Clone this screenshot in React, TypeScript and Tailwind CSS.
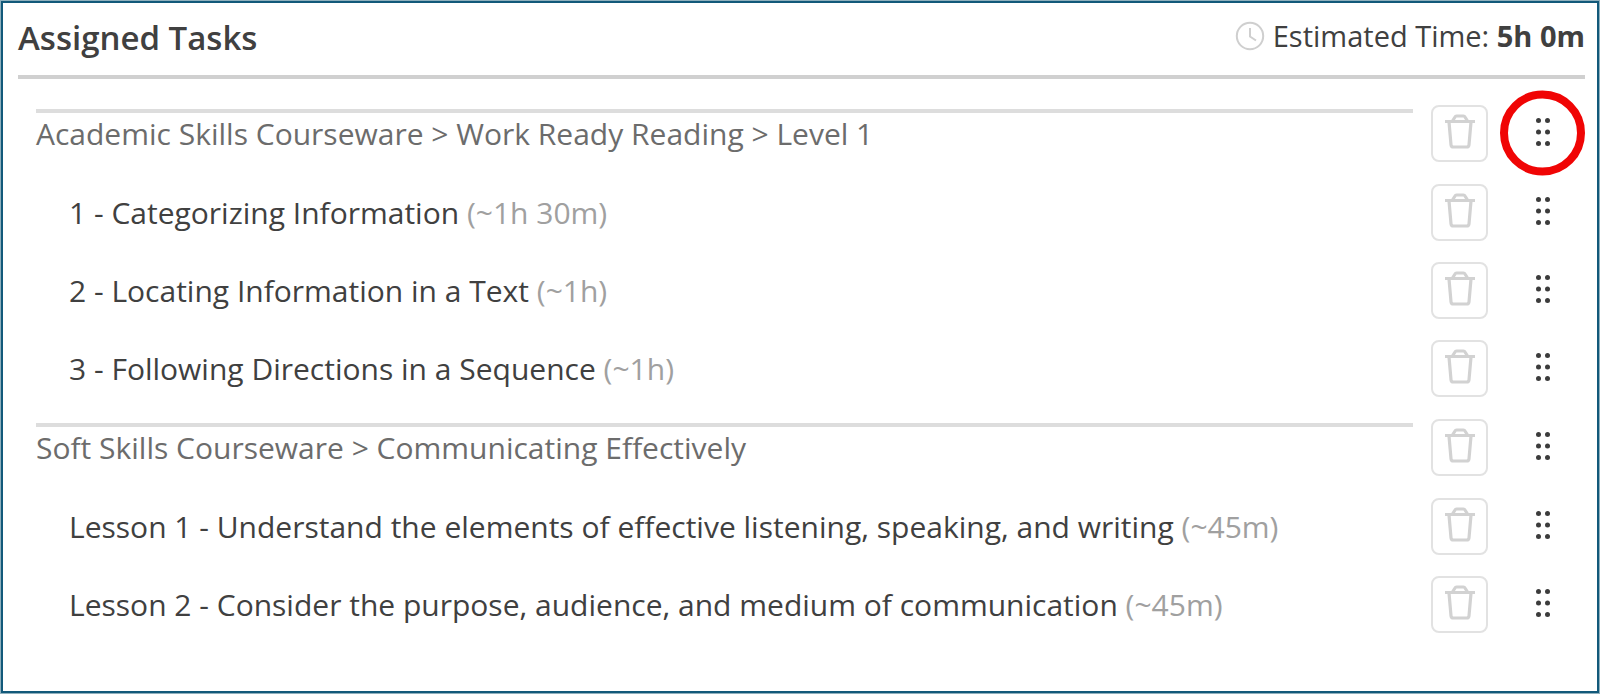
import React, { useState } from 'react';

interface Task {
  id: string;
  title: string;
  duration: string;
}

interface TaskGroup {
  id: string;
  path: string;
  tasks: Task[];
}

const GROUPS: TaskGroup[] = [
  {
    id: 'reading',
    path: 'Academic Skills Courseware > Work Ready Reading > Level 1',
    tasks: [
      { id: 'r1', title: '1 - Categorizing Information', duration: '(~1h 30m)' },
      { id: 'r2', title: '2 - Locating Information in a Text', duration: '(~1h)' },
      { id: 'r3', title: '3 - Following Directions in a Sequence', duration: '(~1h)' },
    ],
  },
  {
    id: 'soft-skills',
    path: 'Soft Skills Courseware > Communicating Effectively',
    tasks: [
      { id: 's1', title: 'Lesson 1 - Understand the elements of effective listening, speaking, and writing', duration: '(~45m)' },
      { id: 's2', title: 'Lesson 2 - Consider the purpose, audience, and medium of communication', duration: '(~45m)' },
    ],
  },
];

const ClockIcon: React.FC = () => (
  <svg className="w-[30px] h-[30px] shrink-0 text-[#cfcfcf]" viewBox="0 0 30 30" fill="none" stroke="currentColor" strokeWidth={2}>
    <circle cx="15" cy="15" r="13.2" />
    <path d="M15 7v8.500l6 4" />
  </svg>
);

const TrashIcon: React.FC = () => (
  <svg className="w-8 h-9" viewBox="0 0 32 36" fill="none" stroke="currentColor" strokeWidth={3.2} strokeLinejoin="round">
    <path d="M1 7.5h30" strokeWidth={3} />
    <path d="M8.500 7l2.500-4q.5-1 1.500-1h7q1 0 1.500 1l2.500 4" />
    <path d="M5 8l2 22.800q.2 2.200 2.400 2.200h13.200q2.200 0 2.400-2.200l2-22.800" />
  </svg>
);

const GripIcon: React.FC = () => (
  <svg className="w-[14px] h-7" viewBox="0 0 14 28" fill="currentColor">
    {[2.5, 14, 25.5].map(cy => (
      <React.Fragment key={cy}>
        <circle cx="2.5" cy={cy} r="2.5" />
        <circle cx="11.5" cy={cy} r="2.5" />
      </React.Fragment>
    ))}
  </svg>
);

const RowActions: React.FC<{ label: string; onDelete: () => void; highlighted?: boolean }> = ({ label, onDelete, highlighted }) => (
  <div className="flex items-center shrink-0 mb-0.5">
    <button
      type="button"
      aria-label={`Delete ${label}`}
      onClick={onDelete}
      className="w-[57px] h-[57px] pb-0.5 rounded-lg border-2 border-[#e2e2e2] text-[#d2d2d2] flex items-center justify-center hover:bg-gray-50"
    >
      <TrashIcon />
    </button>
    <div className="relative w-[85px] ml-3 flex justify-center">
      <button type="button" aria-label={`Move ${label}`} className="p-2 pb-2.5 text-[#3c3c3c] cursor-grab">
        <GripIcon />
      </button>
      {highlighted && (
        <span className="absolute left-0 top-1/2 -translate-y-1/2 w-[85px] h-[85px] rounded-full border-8 border-[#f00505] pointer-events-none" />
      )}
    </div>
  </div>
);

const App: React.FC = () => {
  const [groups, setGroups] = useState(GROUPS);

  const removeGroup = (groupId: string) => {
    setGroups(prev => prev.filter(group => group.id !== groupId));
  };

  const removeTask = (groupId: string, taskId: string) => {
    setGroups(prev => prev.map(group => (
      group.id === groupId ? { ...group, tasks: group.tasks.filter(task => task.id !== taskId) } : group
    )));
  };

  return (
    <div className="min-h-screen flex flex-col bg-white border border-[#8fb0bd] font-['Open_Sans','Noto_Sans',sans-serif] text-[30px] leading-10 text-[#404040]">
      <div className="flex-1 border-2 border-[#12597a] pl-[15px] pr-3 pb-4">
        {/* Header */}
        <header className="h-[76px] flex justify-between border-b-4 border-[#d0d0d0] pt-[11px]">
          <h1 className="text-[33px] leading-12 font-semibold">Assigned Tasks</h1>
          <div className="flex items-center gap-2 h-11 text-[29px]">
            <ClockIcon />
            <p>Estimated Time: <strong className="font-bold">5h 0m</strong></p>
          </div>
        </header>

        {/* Task groups */}
        <main className="pt-[15px] pl-[18px]">
          {groups.map((group, index) => (
            <section key={group.id}>
              <div className="h-20 flex items-center gap-[18px]">
                <h2 className="flex-1 self-stretch mt-[15px] border-t-4 border-[#dddddd] pt-px text-[#6c6c6c]">{group.path}</h2>
                <RowActions label={group.path} onDelete={() => removeGroup(group.id)} highlighted={index === 0} />
              </div>
              <ul>
                {group.tasks.map(task => (
                  <li key={task.id} className="h-[78px] flex items-center gap-[18px] pl-[33px]">
                    <p className="flex-1">
                      {task.title} <span className="text-[#a0a0a0]">{task.duration}</span>
                    </p>
                    <RowActions label={task.title} onDelete={() => removeTask(group.id, task.id)} />
                  </li>
                ))}
              </ul>
            </section>
          ))}
        </main>
      </div>
    </div>
  );
};

export default App;
